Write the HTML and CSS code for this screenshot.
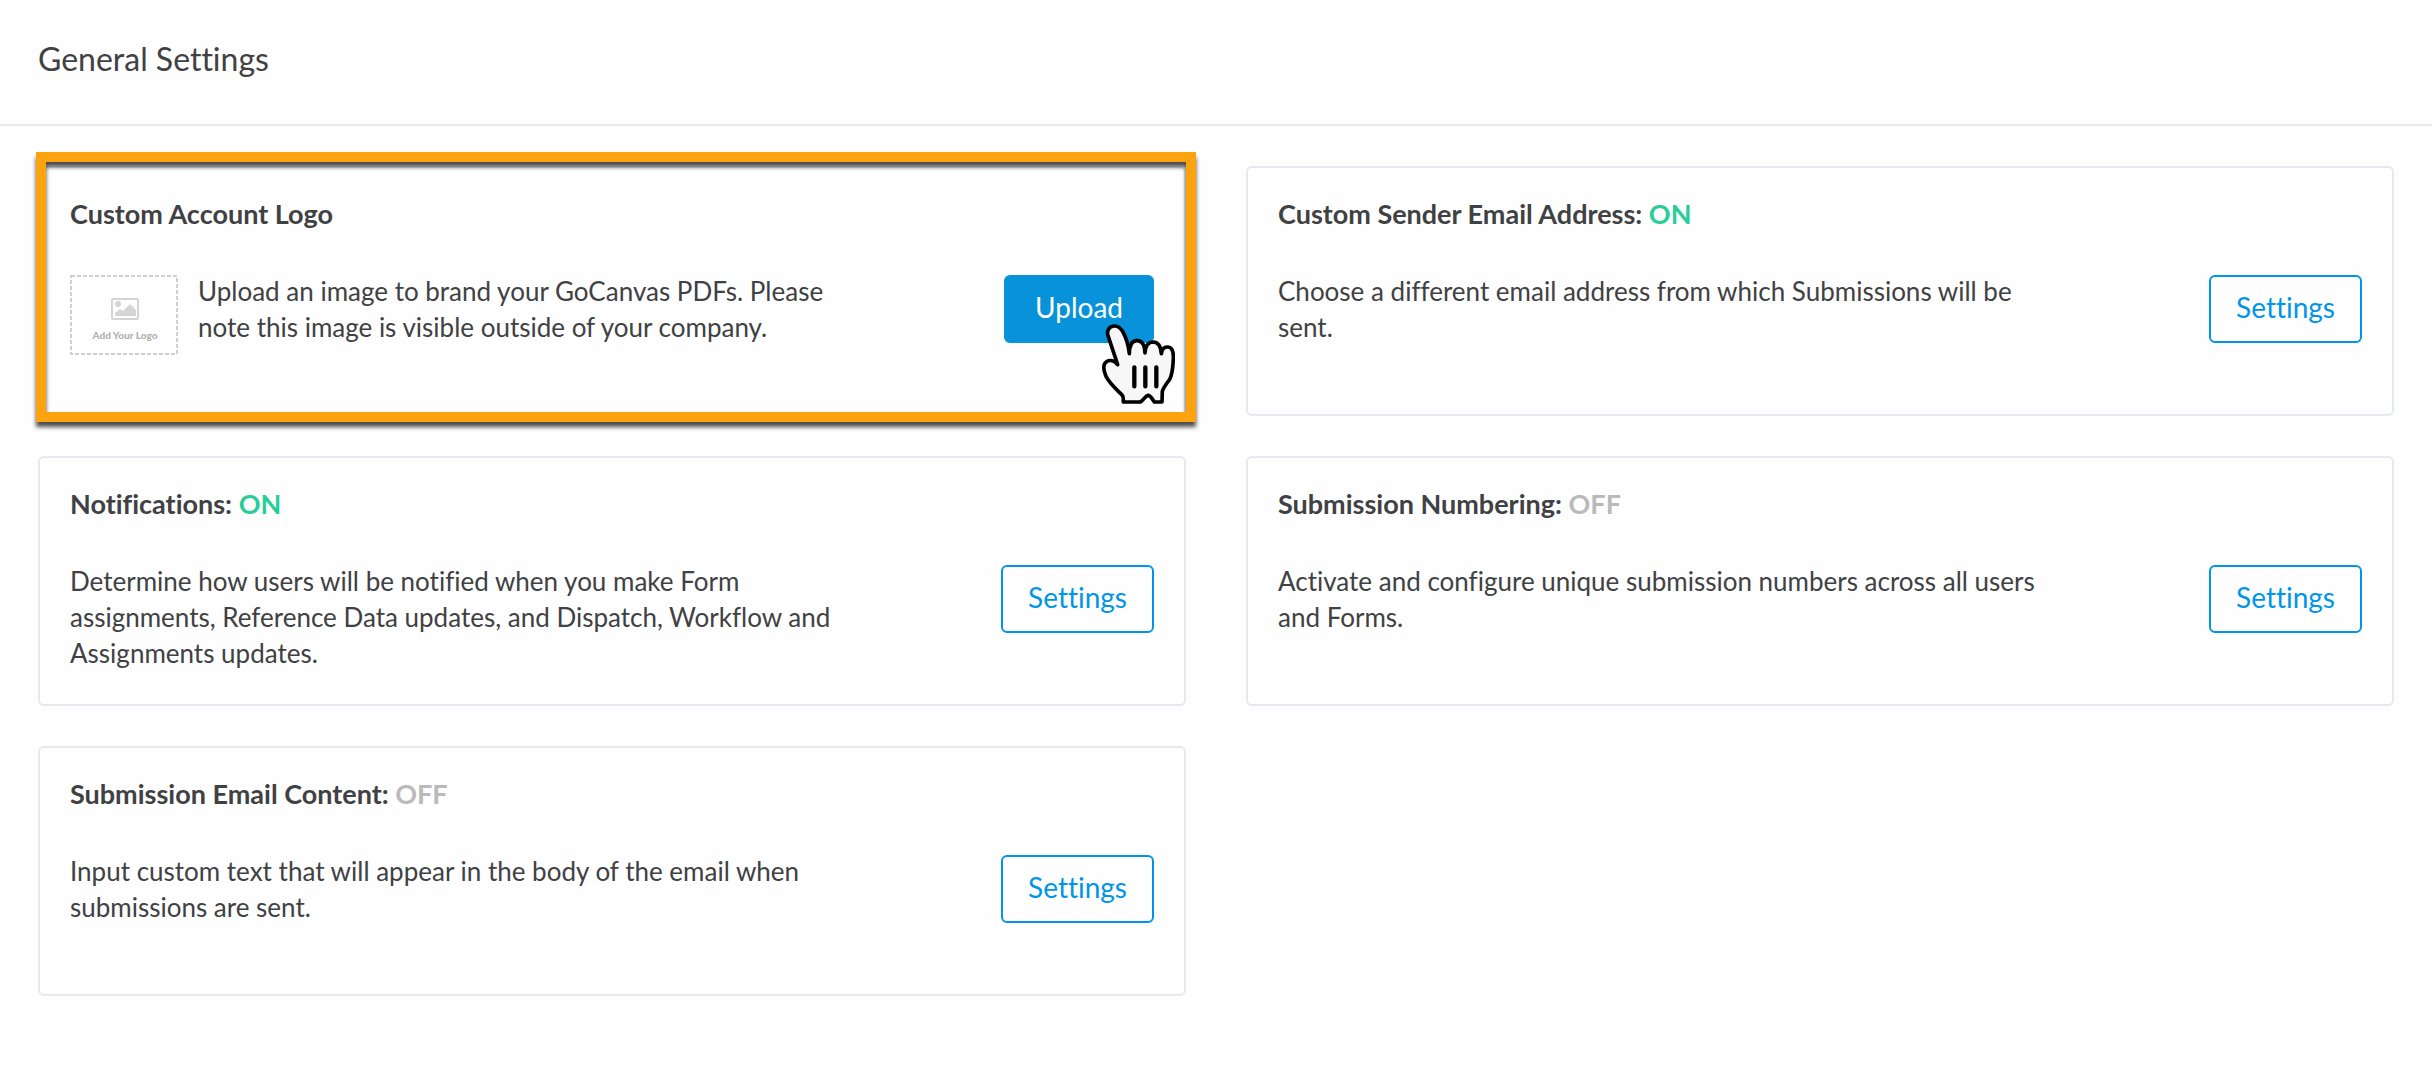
FILE: index.html
```html
<!DOCTYPE html>
<html lang="en">
<head>
    <meta charset="UTF-8">
    <meta name="viewport" content="width=device-width, initial-scale=1.0">
    <title>General Settings</title>
    <link rel="stylesheet" href="styles.css">
</head>
<body>
    <header class="page-header">
        <h1>General Settings</h1>
    </header>

    <main class="settings-grid">
        <section class="card highlighted">
            <h2>Custom Account Logo</h2>
            <div class="card-body">
                <svg class="logo-box" viewBox="0 0 108 80">
                    <rect x="1" y="1" width="106" height="78" fill="none" stroke="#d0d0d0" stroke-width="2" stroke-dasharray="4 2"/>
                    <rect x="42" y="24" width="26" height="20" rx="1" fill="none" stroke="#d4d4d4" stroke-width="2"/>
                    <circle cx="48" cy="29" r="3" fill="#d4d4d4"/>
                    <path d="M45 41v-3l5-4 3 2 7-7 6 6v6z" fill="#d4d4d4"/>
                    <text x="55" y="64" text-anchor="middle">Add Your Logo</text>
                </svg>
                <p>Upload an image to brand your GoCanvas PDFs. Please note this image is visible outside of your company.</p>
                <button type="button" class="btn btn-primary">Upload</button>
            </div>
            <svg class="pointer" viewBox="426 551 219 243" aria-hidden="true">
                <path d="M473 673L445 589C439 573 446 558 462 557C476 556 485 567 490 577C500 597 506 620 508 640C508 618 513 602 530 601C548 600 555 617 555 638C556 618 562 605 580 605C597 606 603 622 604 640C606 626 612 619 624 620C638 621 641 634 640 655C639 680 638 698 630 715C622 728 611 739 607 753L606 785L583 785C576 777 572 764 564 765C556 766 551 780 541 785L490 785C489 777 492 771 487 765C469 747 447 728 438 708C432 694 429 680 434 670C443 656 462 658 473 673Z" fill="#f7f7f7" stroke="#000" stroke-width="11" stroke-linejoin="round"/>
                <path d="M523 681V738M556 681V738M589 681V738" fill="none" stroke="#000" stroke-width="13" stroke-linecap="round"/>
            </svg>
        </section>

        <section class="card">
            <h2>Custom Sender Email Address: <span class="on">ON</span></h2>
            <div class="card-body">
                <p>Choose a different email address from which Submissions will be sent.</p>
                <button type="button" class="btn">Settings</button>
            </div>
        </section>

        <section class="card">
            <h2>Notifications: <span class="on">ON</span></h2>
            <div class="card-body">
                <p>Determine how users will be notified when you make Form assignments, Reference Data updates, and Dispatch, Workflow and Assignments updates.</p>
                <button type="button" class="btn">Settings</button>
            </div>
        </section>

        <section class="card">
            <h2>Submission Numbering: <span class="off">OFF</span></h2>
            <div class="card-body">
                <p>Activate and configure unique submission numbers across all users and Forms.</p>
                <button type="button" class="btn">Settings</button>
            </div>
        </section>

        <section class="card">
            <h2>Submission Email Content: <span class="off">OFF</span></h2>
            <div class="card-body">
                <p>Input custom text that will appear in the body of the email when submissions are sent.</p>
                <button type="button" class="btn">Settings</button>
            </div>
        </section>
    </main>
</body>
</html>
```
FILE: styles.css
```css
* {
    box-sizing: border-box;
}

body {
    margin: 0;
    background-color: #fefefe;
    font-family: Lato, "Liberation Sans", sans-serif;
    font-variant-ligatures: none;
    color: #404143;
}

.page-header {
    padding: 39px 38px 45px;
    border-bottom: 2px solid #e6e9ed;
}

h1 {
    margin: 0;
    font-size: 32px;
    font-weight: 400;
    line-height: 40px;
}

.settings-grid {
    display: grid;
    grid-template-columns: 1fr 1fr;
    gap: 40px 60px;
    padding: 40px 38px;
}

.card {
    position: relative;
    min-height: 250px;
    padding: 28px 30px;
    border: 2px solid #e6e9ed;
    border-radius: 6px;
}

h2 {
    margin: 0 0 41px;
    font-size: 27px;
    font-weight: 700;
    line-height: 36px;
}

.on {
    color: #28cd98;
}

.off {
    color: #b9babb;
}

.card-body {
    display: flex;
    align-items: flex-start;
}

.card-body p {
    max-width: 785px;
    margin: 0 auto 0 0;
    font-size: 26px;
    line-height: 36px;
}

.btn {
    flex: none;
    height: 68px;
    margin-top: 2px;
    padding: 0 25px 4px;
    border: 2px solid #0095e8;
    border-radius: 6px;
    background-color: transparent;
    font-family: inherit;
    font-size: 28px;
    font-variant-ligatures: none;
    color: #0095e8;
    cursor: pointer;
}

.btn-primary {
    padding: 0 29px 4px;
    border-color: #0892da;
    background-color: #0892da;
    color: #fff;
}

.logo-box {
    flex: none;
    width: 108px;
    height: 80px;
    margin: 2px 20px 0 0;
}

.logo-box text {
    font-size: 10px;
    font-weight: 900;
    fill: #b0b0b0;
}

.logo-box + p {
    max-width: 660px;
}

/* orange frame drawn over the card */
.highlighted::after {
    content: "";
    position: absolute;
    top: -16px;
    right: -12px;
    bottom: -8px;
    left: -4px;
    border: 10px solid #fda310;
    filter: drop-shadow(0 5px 2px rgba(0, 0, 0, 0.7));
    pointer-events: none;
}

.pointer {
    position: absolute;
    top: 156px;
    right: 9px;
    width: 73px;
    height: 81px;
}
```
